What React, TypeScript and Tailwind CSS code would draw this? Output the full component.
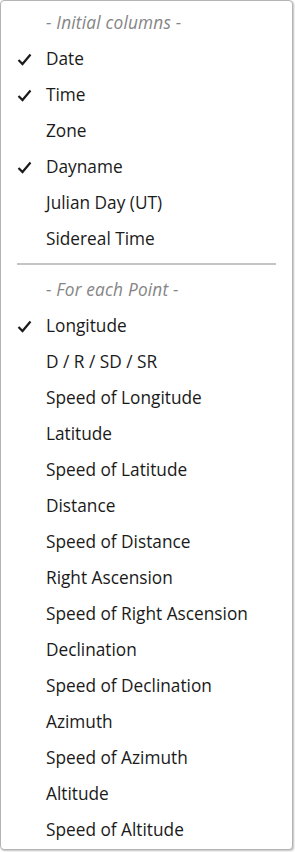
import React from "react";

type Item = { label: string; checked?: boolean };

const initialColumns: Item[] = [
  { label: "Date", checked: true },
  { label: "Time", checked: true },
  { label: "Zone" },
  { label: "Dayname", checked: true },
  { label: "Julian Day (UT)" },
  { label: "Sidereal Time" },
];

const pointColumns: Item[] = [
  { label: "Longitude", checked: true },
  { label: "D / R / SD / SR" },
  { label: "Speed of Longitude" },
  { label: "Latitude" },
  { label: "Speed of Latitude" },
  { label: "Distance" },
  { label: "Speed of Distance" },
  { label: "Right Ascension" },
  { label: "Speed of Right Ascension" },
  { label: "Declination" },
  { label: "Speed of Declination" },
  { label: "Azimuth" },
  { label: "Speed of Azimuth" },
  { label: "Altitude" },
  { label: "Speed of Altitude" },
];

const Check = () => (
  <svg width="15" height="13" viewBox="0 0 15 13" className="absolute left-[16px] top-[12px]">
    <path d="M1.5 7 L5.5 11 L13.5 1.5" fill="none" stroke="#1a1a1a" strokeWidth="2.2" />
  </svg>
);

const Row = ({ item }: { item: Item }) => (
  <div className="relative h-[36px] flex items-center pl-[45px] text-[17.25px] text-[#1a1a1a]">
    {item.checked && <Check />}
    <span>{item.label}</span>
  </div>
);

const Header = ({ text }: { text: string }) => (
  <div className="h-[36px] flex items-center pl-[45px] text-[17.25px] italic text-[#858585] tracking-[0.2px]">
    {text}
  </div>
);

export default function App() {
  return (
    <div className="w-[295px] h-[852px] bg-white">
      <div
        className="w-[293px] h-[850px] border border-[#b4b4b4] rounded-[4px] bg-white pt-[4px] shadow-[1px_1px_2px_rgba(0,0,0,0.25)]"
        style={{ fontFamily: '"Open Sans", "Noto Sans", sans-serif' }}
      >
        <Header text="- Initial columns -" />
        {initialColumns.map((it) => (
          <Row key={it.label} item={it} />
        ))}
        <div className="px-[16px] pt-[6px] pb-[7px]">
          <div className="w-full h-[2px] bg-[#c4c4c4]" />
        </div>
        <Header text="- For each Point -" />
        {pointColumns.map((it) => (
          <Row key={it.label} item={it} />
        ))}
      </div>
    </div>
  );
}
